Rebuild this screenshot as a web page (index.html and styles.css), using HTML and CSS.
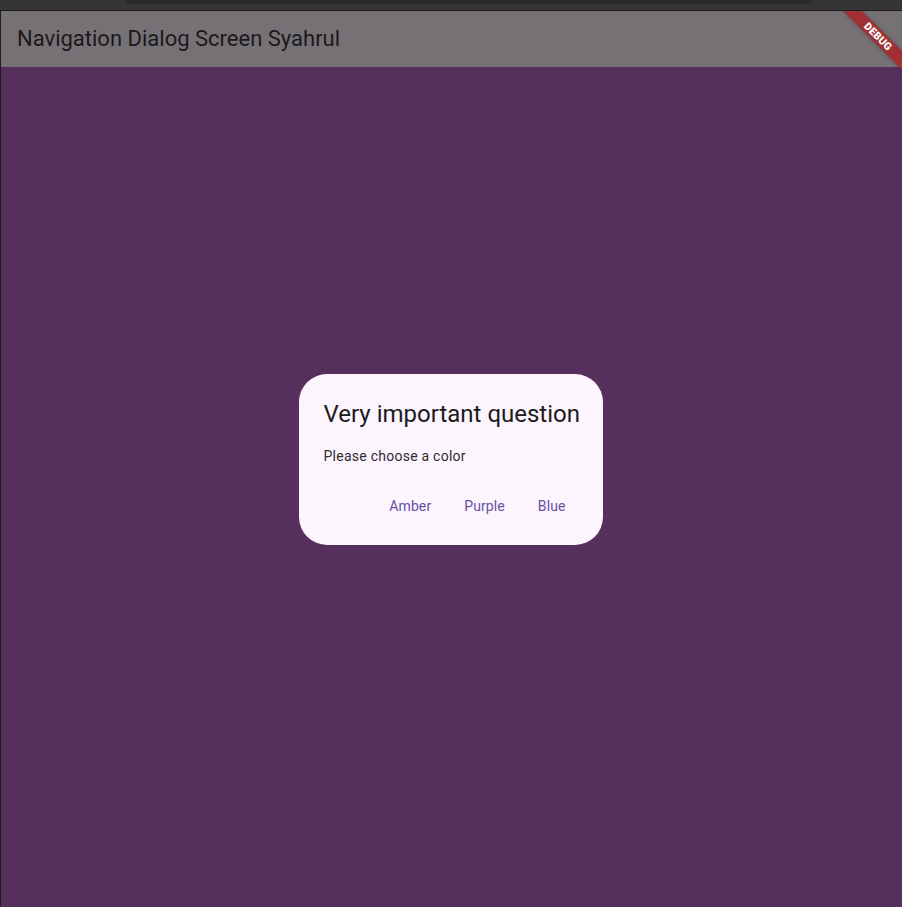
FILE: index.html
```html
<!DOCTYPE html>
<html>
<head>
<meta charset="utf-8">
<link rel="stylesheet" href="styles.css">
</head>
<body>
<div class="chrome">
  <div class="chrome-pill"></div>
</div>
<div class="window">
  <div class="app">
    <header class="appbar">
      <h1 class="appbar-title">Navigation Dialog Screen Syahrul</h1>
    </header>
    <main class="body"></main>
  </div>
  <div class="overlay">
    <div class="dialog" role="dialog">
      <h2 class="dialog-title">Very important question</h2>
      <p class="dialog-content">Please choose a color</p>
      <div class="dialog-actions">
        <button class="text-btn">Amber</button>
        <button class="text-btn">Purple</button>
        <button class="text-btn">Blue</button>
      </div>
    </div>
  </div>
  <div class="banner">
    <div class="ribbon">DEBUG</div>
  </div>
</div>
</body>
</html>
```
FILE: styles.css
```css
* { box-sizing: border-box; }
html, body {
  margin: 0;
  padding: 0;
  width: 902px;
  height: 907px;
  overflow: hidden;
  background: #1e1e1e;
  font-family: Roboto, "Noto Sans", sans-serif;
}
.chrome {
  background: #353535;
  border-bottom: 1px solid #1d1d1d;
  height: 11px;
  padding: 0 90px 0 125px;
}
.chrome-pill {
  height: 4px;
  background: #2b2b2b;
  border-radius: 0 0 8px 8px;
}
.window {
  position: relative;
  height: 896px;
  margin-left: 1px;
  overflow: hidden;
}
.app {
  display: flex;
  flex-direction: column;
  height: 100%;
}
.appbar {
  height: 56px;
  background: #767175;
  display: flex;
  align-items: center;
  padding-left: 16px;
  flex: none;
}
.appbar-title {
  margin: 0;
  font-weight: 400;
  font-size: 22px;
  line-height: 28px;
  color: #1b191c;
}
.body {
  flex: 1;
  background: #56305c;
}
.overlay {
  position: absolute;
  inset: 0;
  display: flex;
  align-items: center;
  justify-content: center;
}
.dialog {
  width: 304px;
  background: #fcf5fd;
  border-radius: 28px;
  padding: 24px 0 0;
  margin-right: 2px;
}
.dialog-title {
  margin: 0;
  padding: 0 24px 0 25px;
  font-size: 24px;
  line-height: 32px;
  font-weight: 400;
  color: #1d1b20;
  white-space: nowrap;
}
.dialog-content {
  margin: 0;
  padding: 16px 24px 20px 25px;
  font-size: 14px;
  line-height: 20px;
  letter-spacing: 0.25px;
  color: #2f2c33;
}
.dialog-actions {
  display: flex;
  justify-content: flex-end;
  gap: 9px;
  padding: 0 25px 19px;
}
.text-btn {
  height: 40px;
  border: none;
  background: transparent;
  padding: 0 12px;
  font-family: Roboto, "Noto Sans", sans-serif;
  font-size: 14px;
  font-weight: 400;
  letter-spacing: 0.1px;
  color: #6750a4;
  border-radius: 20px;
}
.banner {
  position: absolute;
  top: 0;
  right: 0;
  width: 80px;
  height: 80px;
  overflow: hidden;
  pointer-events: none;
}
.ribbon {
  position: absolute;
  left: -4.5px;
  top: 18.5px;
  width: 120px;
  height: 13px;
  transform: rotate(45deg);
  background: #a03033;
  box-shadow: 0 0 4px rgba(0,0,0,0.35);
  color: #fff;
  font-size: 10.5px;
  font-weight: 900;
  line-height: 13px;
  text-align: center;
  letter-spacing: 0.2px;
}
```
